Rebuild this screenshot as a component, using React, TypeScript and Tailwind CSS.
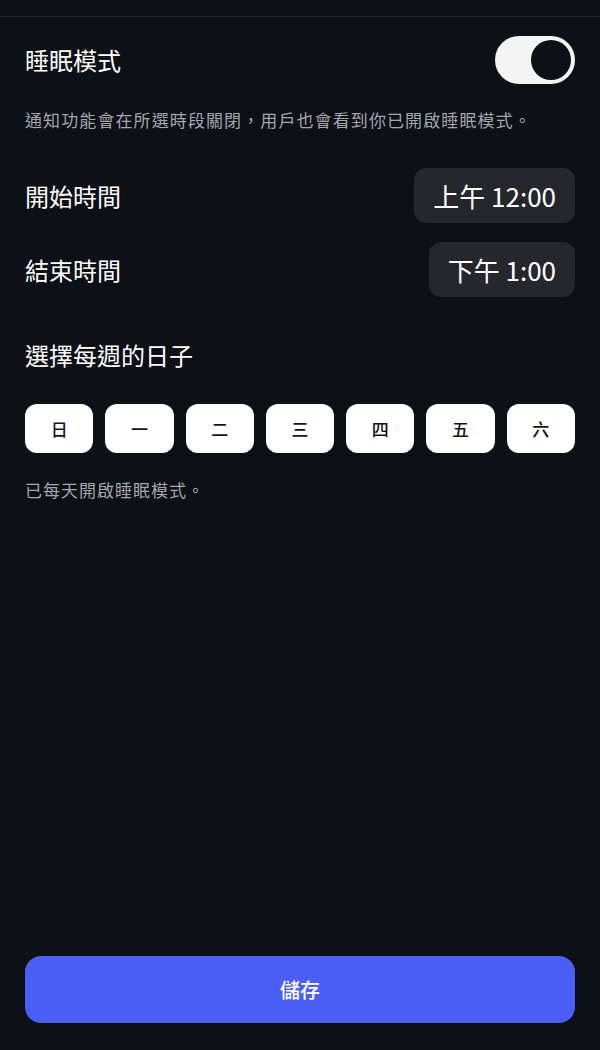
import { useState } from "react";

const days = ["日", "一", "二", "三", "四", "五", "六"];

export default function App() {
  const [enabled, setEnabled] = useState(true);

  return (
    <div
      className="w-[600px] h-[1050px] bg-[#0d1016] text-white flex flex-col"
      style={{ fontFamily: '"Noto Sans CJK TC", "Noto Sans", sans-serif' }}
    >
      <div className="h-[17px] border-b border-[#1f232b]" />

      <div className="px-[25px] flex flex-col flex-1">
        <div className="flex items-center justify-between mt-[19px] h-[48px]">
          <span className="text-[24px] leading-none">睡眠模式</span>
          <button
            onClick={() => setEnabled(!enabled)}
            className="w-[80px] h-[48px] rounded-full bg-[#f4f4f4] p-[4px] flex justify-end items-center"
          >
            <span className="w-[40px] h-[40px] rounded-full bg-[#0d1016]" />
          </button>
        </div>

        <p className="mt-[27px] text-[17px] leading-none text-[#a3a6ad] tracking-[1.1px]">
          通知功能會在所選時段關閉，用戶也會看到你已開啟睡眠模式。
        </p>

        <div className="flex items-center justify-between mt-[40px] h-[55px]">
          <span className="text-[24px] leading-none">開始時間</span>
          <div className="h-[55px] px-[19px] rounded-[12px] bg-[#25272d] flex items-center text-[26px] leading-none">
            上午 12:00
          </div>
        </div>

        <div className="flex items-center justify-between mt-[19px] h-[55px]">
          <span className="text-[24px] leading-none">結束時間</span>
          <div className="h-[55px] px-[19px] rounded-[12px] bg-[#25272d] flex items-center text-[26px] leading-none">
            下午 1:00
          </div>
        </div>

        <div className="mt-[46px] text-[24px] leading-none">選擇每週的日子</div>

        <div className="grid grid-cols-7 gap-[12px] mt-[37px]">
          {days.map((d) => (
            <button
              key={d}
              className="h-[49px] rounded-[12px] bg-white text-[#111318] text-[17px] font-medium flex items-center justify-center"
            >
              {d}
            </button>
          ))}
        </div>

        <p className="mt-[28px] text-[17px] leading-none text-[#a3a6ad] tracking-[1px]">已每天開啟睡眠模式。</p>

        <div className="flex-1" />

        <button className="h-[67px] rounded-[16px] bg-[#4b5ef5] text-white text-[20px] font-medium mb-[27px]">
          儲存
        </button>
      </div>
    </div>
  );
}
